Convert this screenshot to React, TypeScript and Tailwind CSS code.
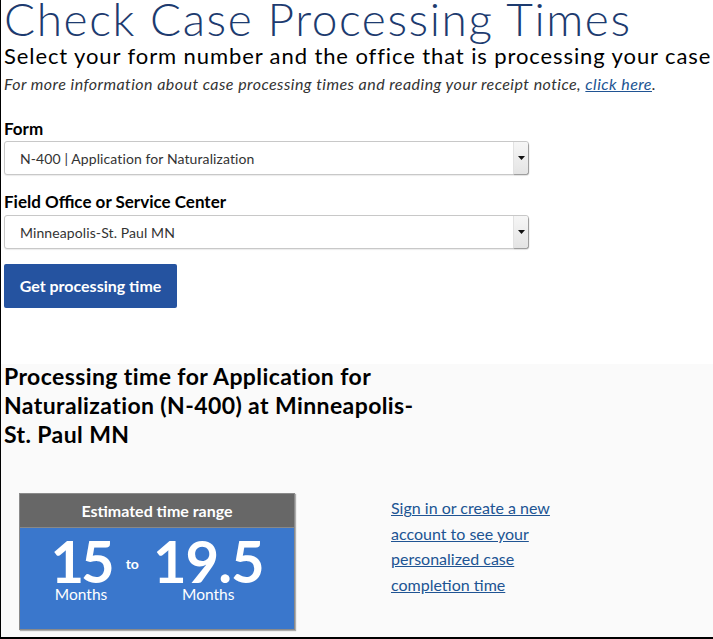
import React from "react";

function Select({ value }: { value: string }) {
  return (
    <div className="relative flex h-[34px] w-[525px] items-center rounded-[3px] border border-[#c8c8c8] bg-white shadow-[0_1px_1px_rgba(0,0,0,0.08)]">
      <span className="pl-[15px] text-[14px] tracking-[0.1px] text-[#333]">{value}</span>
      <div className="absolute right-0 top-0 flex h-full w-[15px] items-center justify-center rounded-r-[3px] border-l border-[#e2e2e2] bg-gradient-to-b from-[#f6f6f6] to-[#e4e4e4] shadow-[1px_1px_1px_#999]">
        <svg width="7" height="4" viewBox="0 0 7 4"><path d="M0 0h7L3.5 4z" fill="#111" /></svg>
      </div>
    </div>
  );
}

export default function App() {
  return (
    <div
      className="flex h-[639px] w-[713px] flex-col overflow-hidden border-b-2 border-l border-black bg-white"
      style={{ fontFamily: "Lato, 'Open Sans', sans-serif" }}
    >
      <div className="pl-[3px]">
        <h1 className="text-[46px] font-light leading-[37px] tracking-[1.6px] text-[#1d3b6f]">
          Check Case Processing Times
        </h1>
        <p className="mt-[5px] whitespace-nowrap text-[22px] leading-[28px] tracking-[0.9px] text-black">
          Select your form number and the office that is processing your case
        </p>
        <p className="mt-[4px] whitespace-nowrap text-[16px] italic leading-[20px] tracking-[0.45px] text-[#333]">
          For more information about case processing times and reading your receipt notice,{" "}
          <a className="text-[#205493] underline">click here</a>.
        </p>
        <div className="mt-[25px] text-[17px] font-bold leading-[20px] text-black">Form</div>
        <div className="mt-[2px]">
          <Select value="N-400 | Application for Naturalization" />
        </div>
        <div className="mt-[17px] text-[17px] font-bold leading-[20px] text-black">
          Field Office or Service Center
        </div>
        <div className="mt-[3px]">
          <Select value="Minneapolis-St. Paul MN" />
        </div>
        <button className="mt-[15px] h-[44px] w-[173px] rounded-[2px] bg-[#2553a0] text-[16px] font-bold text-white">
          Get processing time
        </button>
      </div>
      <div className="mt-[56px] flex-1 bg-[#fafafa] pl-[3px]">
        <h2 className="mt-[-2px] text-[23px] font-bold leading-[29px] tracking-[0.4px] text-black">
          Processing time for Application for
          <br />
          Naturalization (N-400) at Minneapolis-
          <br />
          St. Paul MN
        </h2>
        <div className="mt-[44px] flex items-start">
          <div className="ml-[15px] w-[276px] border border-[#8a8a8a] shadow-[1px_1px_1px_rgba(0,0,0,0.3)]">
            <div className="flex h-[34px] items-center justify-center border-b border-[#888] bg-[#676767] text-[16px] font-bold text-white">
              Estimated time range
            </div>
            <div className="flex h-[101px] items-start justify-center bg-[#3a77cc] pt-[11px] text-white">
              <div className="flex flex-col items-center">
                <span className="text-[58px] font-bold leading-[44px] tracking-[-3px]">15</span>
                <span className="mt-[4px] text-[15.5px] leading-[15px]">Months</span>
              </div>
              <span className="mx-[14px] mt-[14px] text-[14px] font-bold">to</span>
              <div className="flex flex-col items-center">
                <span className="text-[58px] font-bold leading-[44px] tracking-[-1px]">19.5</span>
                <span className="mt-[4px] text-[15.5px] leading-[15px]">Months</span>
              </div>
            </div>
          </div>
          <a className="ml-[96px] mt-[2px] w-[172px] text-[16px] leading-[25.5px] text-[#205493] underline">
            Sign in or create a new account to see your personalized case completion time
          </a>
        </div>
      </div>
    </div>
  );
}
